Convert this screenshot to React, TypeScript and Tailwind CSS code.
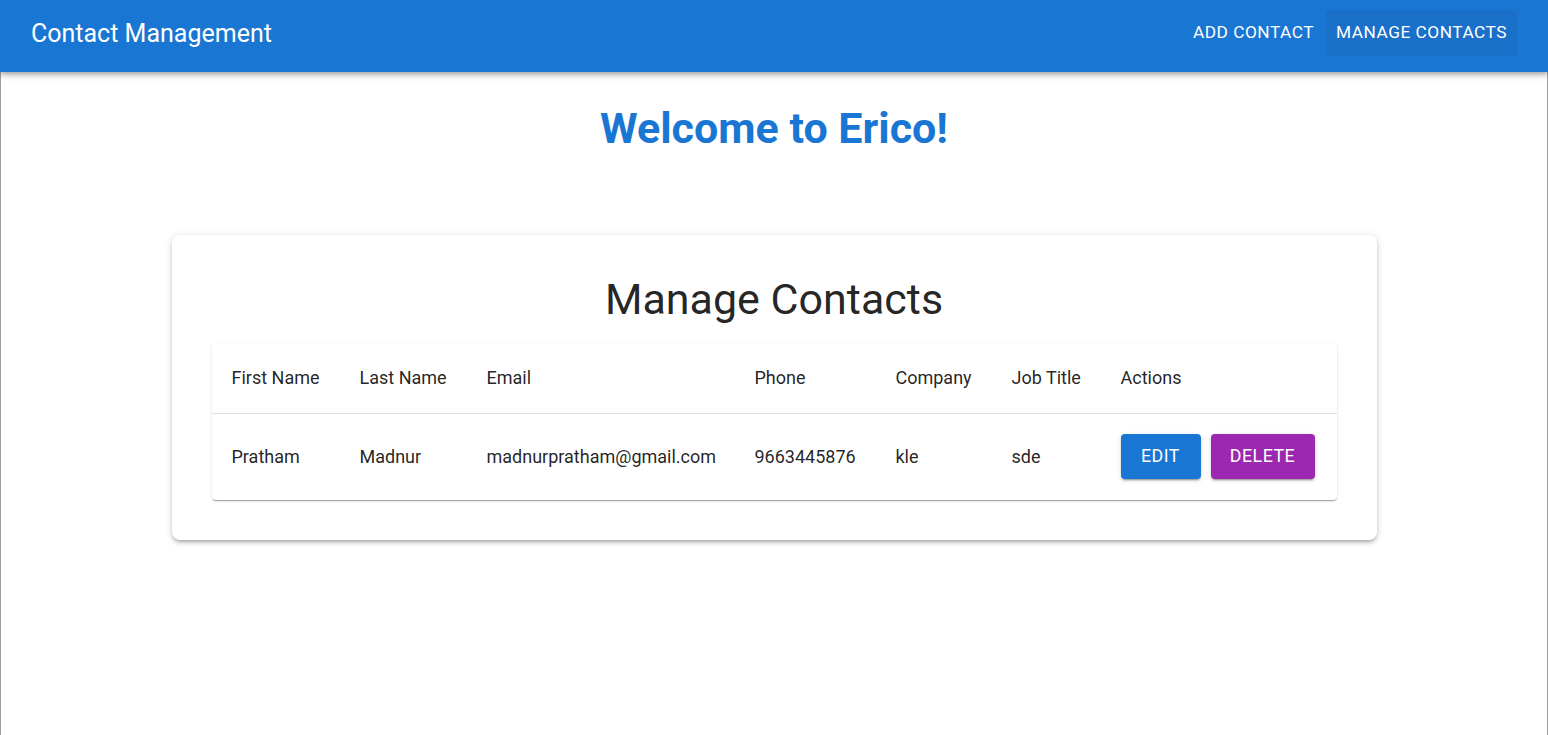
import React from "react"

const contacts = [
  {
    firstName: "Pratham",
    lastName: "Madnur",
    email: "madnurpratham@gmail.com",
    phone: "9663445876",
    company: "kle",
    jobTitle: "sde",
  },
]

const columns = [
  { label: "First Name", width: "w-[128px]" },
  { label: "Last Name", width: "w-[127px]" },
  { label: "Email", width: "w-[268px]" },
  { label: "Phone", width: "w-[141px]" },
  { label: "Company", width: "w-[116px]" },
  { label: "Job Title", width: "w-[109px]" },
  { label: "Actions", width: "" },
]

const btnShadow =
  "shadow-[0_3px_1px_-2px_rgba(0,0,0,0.2),0_2px_2px_0_rgba(0,0,0,0.14),0_1px_5px_0_rgba(0,0,0,0.12)]"

export default function App() {
  return (
    <div className="flex min-h-screen flex-col bg-white font-['Roboto','Liberation_Sans',sans-serif] text-[rgba(0,0,0,0.87)]">
      {/* App bar */}
      <header className="relative z-10 flex h-[72px] items-center justify-between bg-[#1976d2] pb-[6px] pl-[31px] pr-[31px] text-white shadow-[0_2px_4px_-1px_rgba(0,0,0,0.2),0_4px_5px_0_rgba(0,0,0,0.14),0_1px_10px_0_rgba(0,0,0,0.12)]">
        <h1 className="text-[25px] leading-none">Contact Management</h1>
        <nav className="flex items-center gap-[2px]">
          <a className="flex h-[46px] items-center rounded px-[10px] text-[17.3px] uppercase tracking-[0.02857em]">
            Add Contact
          </a>
          <a className="flex h-[46px] items-center rounded bg-[#1a6fc9] px-[10px] text-[17.3px] uppercase tracking-[0.02857em]">
            Manage Contacts
          </a>
        </nav>
      </header>

      <main className="flex flex-1 flex-col items-center border-x border-[#9e9e9e]">
        <h2 className="mt-[28px] text-[43px] font-bold leading-[56px] text-[#1976d2]">
          Welcome to Erico!
        </h2>

        {/* Card */}
        <section className="mt-[79px] w-[1205px] rounded-lg bg-white p-10 shadow-[0_3px_3px_-2px_rgba(0,0,0,0.2),0_3px_4px_0_rgba(0,0,0,0.14),0_1px_8px_0_rgba(0,0,0,0.12)]">
          <h3 className="mb-5 text-center text-[43px] leading-[48px]">Manage Contacts</h3>

          <div className="overflow-hidden rounded bg-white shadow-[0_2px_1px_-1px_rgba(0,0,0,0.2),0_1px_1px_0_rgba(0,0,0,0.14),0_1px_3px_0_rgba(0,0,0,0.12)]">
            <table className="w-full table-fixed border-collapse text-left text-[18px]">
              <thead>
                <tr className="h-[70px] border-b border-[#e0e0e0]">
                  {columns.map((c) => (
                    <th key={c.label} className={`${c.width} pl-5 font-normal`}>
                      {c.label}
                    </th>
                  ))}
                </tr>
              </thead>
              <tbody>
                {contacts.map((c) => (
                  <tr key={c.email} className="h-[87px]">
                    <td className="pl-5">{c.firstName}</td>
                    <td className="pl-5">{c.lastName}</td>
                    <td className="pl-5">{c.email}</td>
                    <td className="pl-5">{c.phone}</td>
                    <td className="pl-5">{c.company}</td>
                    <td className="pl-5">{c.jobTitle}</td>
                    <td className="pl-5">
                      <div className="flex gap-[10px]">
                        <button className={`h-[45px] w-[80px] rounded bg-[#1976d2] text-[17.8px] uppercase tracking-[0.02857em] text-white ${btnShadow}`}>
                          Edit
                        </button>
                        <button className={`h-[45px] w-[104px] rounded bg-[#9c27b0] text-[17.8px] uppercase tracking-[0.02857em] text-white ${btnShadow}`}>
                          Delete
                        </button>
                      </div>
                    </td>
                  </tr>
                ))}
              </tbody>
            </table>
          </div>
        </section>
      </main>
    </div>
  )
}
